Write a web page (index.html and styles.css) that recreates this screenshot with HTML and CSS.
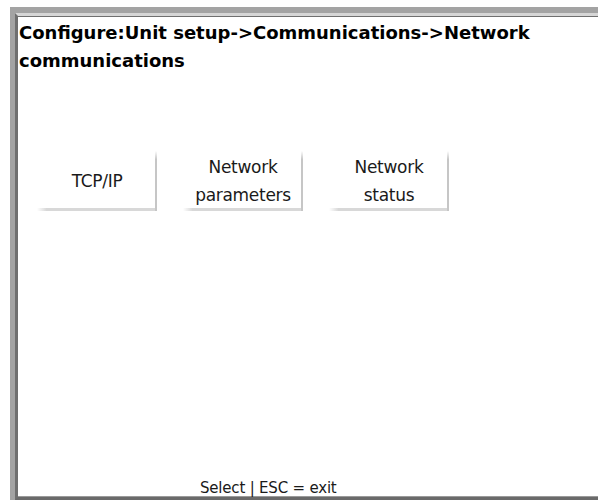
FILE: index.html
```html
<!DOCTYPE html>
<html>
<head>
<meta charset="utf-8" />
<title>Network communications</title>
<link rel="stylesheet" href="styles.css">
</head>
<body>
<div class="bezel">
  <div class="panel">
    <div class="title">Configure:Unit setup-&gt;Communications-&gt;Network communications</div>

    <div class="menu">
      <div class="menu_btn">TCP/IP</div>
      <div class="menu_btn">Network<br />parameters</div>
      <div class="menu_btn">Network<br />status</div>
    </div>

    <div class="hint">Select | ESC = exit</div>
  </div>
</div>
</body>
</html>
```

FILE: styles.css
```css
html, body { margin: 0; padding: 0; background: #fff; overflow: hidden; }
body { width: 598px; height: 501px; font-family: "DejaVu Sans", Verdana, sans-serif; color: #111; }

.bezel { margin: 7px 0 0 10px; width: 600px; height: 493px; box-sizing: border-box;
  border-top: 6px solid #a3a3a3; border-left: 5px solid #a3a3a3; background: #a3a3a3; }
.panel { box-sizing: border-box; height: 100%; display: flex; flex-direction: column;
  border-top: 3px solid #d6d6d6; border-left: 3px solid #6f6f6f; border-bottom: 3px solid #6a6a6a;
  background: linear-gradient(#6f6f6f, #6f6f6f) top left / 100% 1px no-repeat, #fff;
  box-shadow: inset 0 -1px 0 #9a9a9a; }

.title { font-weight: bold; font-size: 18px; line-height: 28px; padding: 3px 0 0 1px; width: 545px; color: #000; letter-spacing: 0; }

.menu { display: flex; gap: 26px; margin: 76px 0 0 19px; }
.menu_btn { width: 120px; height: 60px; display: flex; align-items: center; justify-content: center;
  text-align: center; font-size: 17px; line-height: 28px; color: #1a1a1a; letter-spacing: -0.3px;
  background:
    linear-gradient(rgba(200,200,200,0), #c6c6c6 14%) right top / 2px 100% no-repeat,
    linear-gradient(to right, rgba(216,216,216,0), #d8d8d8 8%) left bottom / 100% 3px no-repeat,
    #fff; }

.hint { margin-top: auto; padding: 0 0 0 182px; font-size: 15px; line-height: 17px; color: #1a1a1a; letter-spacing: -0.2px; }
```
